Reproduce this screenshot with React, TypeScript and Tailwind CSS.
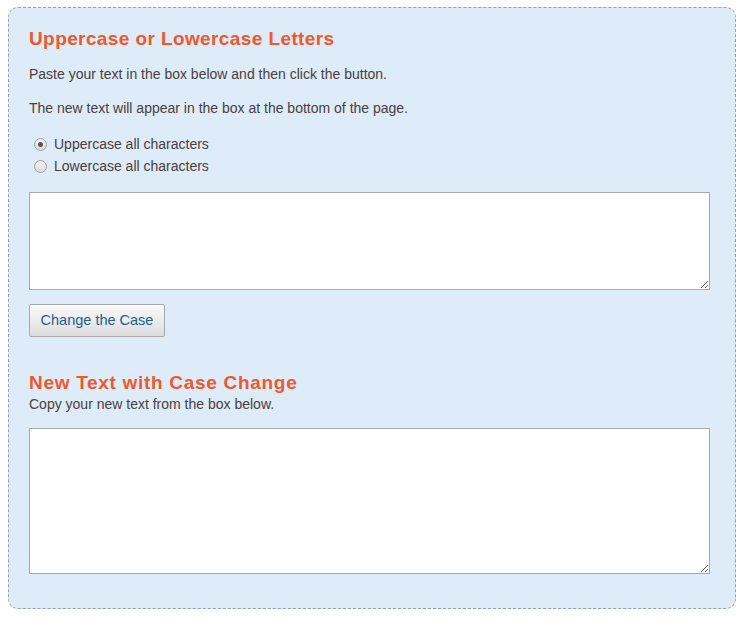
import React from "react";

function Radio({ checked }: { checked?: boolean }) {
  return (
    <span className="inline-flex items-center justify-center w-[13px] h-[13px] rounded-full border border-[#a0a0a0] bg-gradient-to-b from-[#f4f4f4] to-[#dcdcdc] shrink-0">
      {checked && <span className="w-[5px] h-[5px] rounded-full bg-[#555]" />}
    </span>
  );
}

export default function App() {
  return (
    <div className="w-[747px] h-[619px] bg-white pt-[7px] pl-[8px] font-['Liberation_Sans',Arial,sans-serif] text-[14px] text-[#4a4040]">
      <div className="w-[728px] h-[602px] border border-dashed border-[#9aa0a8] rounded-[10px] bg-[#deebf8] pl-[20px] pr-[25px] pt-[19px]">
        <h1 className="text-[19px] leading-[24px] font-bold text-[#f0582e] tracking-[0.4px]">
          Uppercase or Lowercase Letters
        </h1>
        <p className="mt-[14px] leading-[18px]">Paste your text in the box below and then click the button.</p>
        <p className="mt-[16px] leading-[18px]">The new text will appear in the box at the bottom of the page.</p>
        <div className="mt-[16px] flex flex-col">
          <label className="flex items-center gap-[7px] h-[22px] pl-[5px]">
            <Radio checked />
            <span>Uppercase all characters</span>
          </label>
          <label className="flex items-center gap-[7px] h-[22px] pl-[5px]">
            <Radio />
            <span>Lowercase all characters</span>
          </label>
        </div>
        <textarea className="mt-[15px] block w-full h-[98px] bg-white border border-[#a9a9a9] resize-y" />
        <button className="mt-[14px] block w-[136px] h-[33px] border border-[#a9a9a9] rounded-[2px] bg-gradient-to-b from-[#fafafa] to-[#dddddd] text-[14.5px] text-[#1f5f94]">
          Change the Case
        </button>
        <h2 className="mt-[34px] text-[19px] leading-[24px] font-bold text-[#f0582e] tracking-[0.7px]">
          New Text with Case Change
        </h2>
        <p className="leading-[18px]">Copy your new text from the box below.</p>
        <textarea className="mt-[15px] block w-full h-[146px] bg-white border border-[#a9a9a9] resize-y" />
      </div>
    </div>
  );
}
